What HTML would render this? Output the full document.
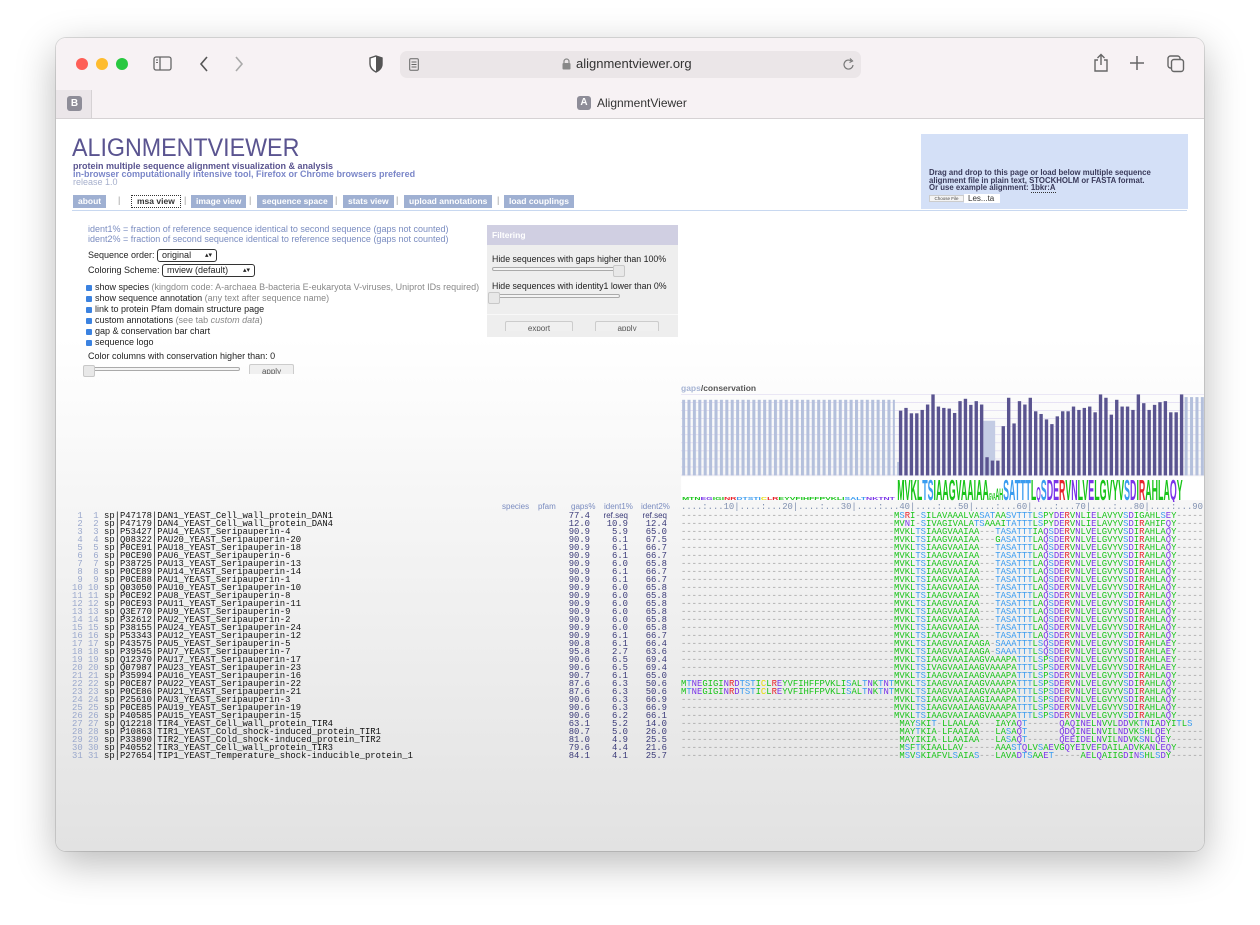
<!DOCTYPE html>
<html><head><meta charset="utf-8"><style>
*{margin:0;padding:0;box-sizing:border-box}
body{width:1260px;height:925px;background:#fff;position:relative;overflow:hidden;font-family:"Liberation Sans",sans-serif}
.win{position:absolute;left:56px;top:38px;width:1148px;height:813px;border-radius:10px;overflow:hidden;box-shadow:0 12px 40px rgba(0,0,0,.28),0 0 0 1px rgba(0,0,0,.12);background:linear-gradient(#fff 0,#fff 300px,#e2e2e2 813px)}
.tb{position:absolute;left:0;top:0;width:1148px;height:52px;background:#f7f2f4}
.tabs{position:absolute;left:0;top:52px;width:1148px;height:29px;background:#f7f2f4;border-bottom:1px solid #d6d2d4}
.ab{position:absolute}
.mono{font-family:"Liberation Mono",monospace}
.aln{position:absolute;left:625px;top:474px;width:523px;height:250px;overflow:hidden;font-family:"Liberation Mono",monospace;font-size:8.9px;line-height:8px;white-space:pre;color:#a0a0a0}
.aln i{font-style:normal}
.g{color:#18c418}.b{color:#3a9cf0}.p{color:#7a34e8}.r{color:#e8242c}.y{color:#e6dc00}
.lt{position:absolute;top:474px;font-family:"Liberation Mono",monospace;font-size:8.9px;line-height:8px;white-space:pre}
.nav span{position:absolute;top:157px;height:13px;background:#9fb0d2;color:#fff;font-size:8.5px;font-weight:bold;line-height:13px;padding:0 5px}
.sep{position:absolute;top:157px;color:#999;font-size:9px}
.opt{position:absolute;font-size:9px;color:#222}
.cb{display:inline-block;width:6px;height:6px;background:#3b82e0;border-radius:1px;margin-right:3px;vertical-align:-1px}
.gr{color:#888}
.sel{display:inline-block;border:1px solid #333;border-radius:3px;padding:0 4px;font-size:9px;background:#fff;height:13px;line-height:11px}
.sl{position:absolute;height:4px;border:1px solid #aaa;border-radius:2px;background:#f4f4f4}
.knob{position:absolute;width:12px;height:12px;background:#e8e8e8;border:1px solid #c8c8c8;border-radius:2px}
.btn{position:absolute;height:10px;border:1px solid #ccc;border-bottom:none;background:#f0f0f0;border-radius:2px 2px 0 0;font-size:8px;color:#555;text-align:center;overflow:hidden;line-height:14px}
</style></head><body>
<div class="win">
<div class="tb">
 <div class="ab" style="left:20px;top:20px;width:12px;height:12px;border-radius:50%;background:#fe5f57"></div>
 <div class="ab" style="left:40px;top:20px;width:12px;height:12px;border-radius:50%;background:#febc2e"></div>
 <div class="ab" style="left:60px;top:20px;width:12px;height:12px;border-radius:50%;background:#28c840"></div>
 <svg class="ab" style="left:97px;top:18px" width="20" height="16"><rect x="1" y="1" width="17" height="13" rx="2" fill="none" stroke="#666" stroke-width="1.3"/><line x1="7" y1="1" x2="7" y2="14" stroke="#666" stroke-width="1.3"/><line x1="3" y1="4" x2="5" y2="4" stroke="#666"/><line x1="3" y1="6.5" x2="5" y2="6.5" stroke="#666"/></svg>
 <svg class="ab" style="left:142px;top:17px" width="12" height="18"><path d="M9 2 L3 9 L9 16" fill="none" stroke="#555" stroke-width="1.6"/></svg>
 <svg class="ab" style="left:177px;top:17px" width="12" height="18"><path d="M3 2 L9 9 L3 16" fill="none" stroke="#aaa" stroke-width="1.6"/></svg>
 <svg class="ab" style="left:313px;top:17px" width="14" height="18"><path d="M7 1 L13 3 L13 9 C13 13 10 15.5 7 17 C4 15.5 1 13 1 9 L1 3 Z" fill="#fff" stroke="#555" stroke-width="1.4"/><path d="M7 1 L13 3 L13 9 C13 13 10 15.5 7 17 Z" fill="#555"/></svg>
 <div class="ab" style="left:344px;top:13px;width:461px;height:27px;background:#ebe6e8;border-radius:7px"></div>
 <svg class="ab" style="left:353px;top:20px" width="10" height="13"><rect x="0.7" y="0.7" width="8.6" height="11.6" rx="1" fill="none" stroke="#666"/><line x1="2.5" y1="4" x2="7.5" y2="4" stroke="#666"/><line x1="2.5" y1="6.5" x2="7.5" y2="6.5" stroke="#666"/><line x1="2.5" y1="9" x2="7.5" y2="9" stroke="#666"/></svg>
 <svg class="ab" style="left:506px;top:20px" width="9" height="12"><rect x="0.5" y="5" width="8" height="6.5" rx="1" fill="#888"/><path d="M2 5 V3.5 A2.5 2.5 0 0 1 7 3.5 V5" fill="none" stroke="#888" stroke-width="1.2"/></svg>
 <div class="ab" style="left:520px;top:18px;font-size:13px;color:#333">alignmentviewer.org</div>
 <svg class="ab" style="left:787px;top:20px" width="12" height="13"><path d="M10 7 A4.5 4.5 0 1 1 8 2.8" fill="none" stroke="#777" stroke-width="1.2"/><path d="M7 0.5 L9.5 3 L6.5 4.5" fill="none" stroke="#777" stroke-width="1.2"/></svg>
 <svg class="ab" style="left:1037px;top:15px" width="16" height="20"><path d="M5 7 H2 V18 H14 V7 H11" fill="none" stroke="#666" stroke-width="1.4"/><path d="M8 12 V1.5 M4.5 5 L8 1.5 L11.5 5" fill="none" stroke="#666" stroke-width="1.4"/></svg>
 <svg class="ab" style="left:1074px;top:18px" width="14" height="14"><path d="M7 0 V14 M0 7 H14" stroke="#666" stroke-width="1.5"/></svg>
 <svg class="ab" style="left:1111px;top:17px" width="18" height="18"><rect x="1" y="1" width="12" height="12" rx="2.5" fill="none" stroke="#666" stroke-width="1.4"/><rect x="4.5" y="4.5" width="12" height="12" rx="2.5" fill="#f7f2f4" stroke="#666" stroke-width="1.4"/></svg>
</div>
<div class="tabs">
 <div class="ab" style="left:0;top:0;width:36px;height:28px;background:#ebe6e9;border-right:1px solid #d6d2d4"></div>
 <div class="ab" style="left:11px;top:6px;width:15px;height:15px;border-radius:3px;background:#8e8d98;color:#fff;font-size:10px;font-weight:bold;text-align:center;line-height:15px">B</div>
 <div class="ab" style="left:521px;top:6px;width:14px;height:14px;border-radius:3px;background:#8e8d98;color:#fff;font-size:10px;font-weight:bold;text-align:center;line-height:14px">A</div>
 <div class="ab" style="left:541px;top:6px;font-size:12px;color:#333">AlignmentViewer</div>
</div>

<div class="ab" style="left:16px;top:96px;font-size:25px;color:#5a5490;transform:scaleX(0.93);transform-origin:0 0">ALIGNMENTVIEWER</div>
<div class="ab" style="left:17px;top:124px;font-size:9px;line-height:9px;font-weight:bold;color:#5a5490">protein multiple sequence alignment visualization &amp; analysis</div>
<div class="ab" style="left:17px;top:132px;font-size:9px;line-height:9px;font-weight:bold;color:#7a86c8">in-browser computationally intensive tool, Firefox or Chrome browsers prefered</div>
<div class="ab" style="left:17px;top:140px;font-size:9px;line-height:9px;color:#a6afcc">release 1.0</div>
<div class="nav">
 <span style="left:17px">about</span>
 <div class="sep" style="left:62px">|</div>
 <span style="left:75px;background:#fff;color:#333;border:1px dotted #333;line-height:11px">msa view</span>
 <div class="sep" style="left:128px">|</div>
 <span style="left:135px">image view</span>
 <div class="sep" style="left:193px">|</div>
 <span style="left:201px">sequence space</span>
 <div class="sep" style="left:279px">|</div>
 <span style="left:287px">stats view</span>
 <div class="sep" style="left:340px">|</div>
 <span style="left:348px">upload annotations</span>
 <div class="sep" style="left:441px">|</div>
 <span style="left:448px">load couplings</span>
</div>
<div class="ab" style="left:16px;top:172px;width:1115px;height:1px;background:#c8d8f0"></div>
<div class="ab" style="left:865px;top:96px;width:267px;height:75px;background:#d4e0f7"></div>
<div class="ab" style="left:873px;top:131px;font-size:7.8px;line-height:7.6px;font-weight:bold;color:#3a3a5a">Drag and drop to this page or load below multiple sequence<br>alignment file in plain text, STOCKHOLM or FASTA format.<br>Or use example alignment: <span style="border-bottom:1px dotted #333">1bkr:A</span></div>
<div class="ab" style="left:873px;top:157px;width:35px;height:7px;background:#f4f4f4;border:1px solid #ccc;font-size:4.5px;color:#444;text-align:center;line-height:5px">Choose File</div>
<div class="ab" style="left:908px;top:156px;width:36px;height:9px;background:#fff;font-size:8px;line-height:9px;color:#333;padding-left:4px">Les...ta</div>

<div class="ab" style="left:32px;top:186px;font-size:9px;line-height:10px;color:#7a8cc0;white-space:nowrap">ident1% = fraction of reference sequence identical to second sequence (gaps not counted)<br>ident2% = fraction of second sequence identical to reference sequence (gaps not counted)</div>
<div class="opt" style="left:32px;top:211px">Sequence order: <span class="sel" style="width:60px">original <span style="float:right;font-size:7px">&#x25B4;&#x25BE;</span></span></div>
<div class="opt" style="left:32px;top:226px">Coloring Scheme: <span class="sel" style="width:93px">mview (default)<span style="float:right;font-size:7px">&#x25B4;&#x25BE;</span></span></div>
<div class="opt" style="left:30px;top:244px;line-height:11px;white-space:nowrap"><span class="cb"></span>show species <span class="gr">(kingdom code: A-archaea B-bacteria E-eukaryota V-viruses, Uniprot IDs required)</span><br><span class="cb"></span>show sequence annotation <span class="gr">(any text after sequence name)</span><br><span class="cb"></span>link to protein Pfam domain structure page<br><span class="cb"></span>custom annotations <span class="gr">(see tab <i>custom data</i>)</span><br><span class="cb"></span>gap &amp; conservation bar chart<br><span class="cb"></span>sequence logo</div>
<div class="opt" style="left:32px;top:313px">Color columns with conservation higher than: 0</div>
<div class="sl" style="left:29px;top:329px;width:155px"></div>
<div class="knob" style="left:27px;top:327px"></div>
<div class="btn" style="left:193px;top:326px;width:45px">apply</div>

<div class="ab" style="left:431px;top:187px;width:191px;height:112px;background:#eeeeee"></div>
<div class="ab" style="left:431px;top:187px;width:191px;height:20px;background:#d0cfe2;color:#fff;font-weight:bold;font-size:8.5px;line-height:20px;padding-left:5px">Filtering</div>
<div class="opt" style="left:436px;top:216px;font-size:8.8px;white-space:nowrap">Hide sequences with gaps higher than 100%</div>
<div class="sl" style="left:436px;top:229px;width:128px"></div>
<div class="knob" style="left:557px;top:227px"></div>
<div class="opt" style="left:436px;top:243px;font-size:8.8px;white-space:nowrap">Hide sequences with identity1 lower than 0%</div>
<div class="sl" style="left:436px;top:256px;width:128px"></div>
<div class="knob" style="left:432px;top:254px"></div>
<div class="ab" style="left:431px;top:276px;width:191px;height:1px;background:#f8f8f8"></div>
<div class="btn" style="left:449px;top:283px;width:68px">export</div>
<div class="btn" style="left:539px;top:283px;width:64px">apply</div>

<div class="ab" style="left:625px;top:345px;font-size:8.5px;font-weight:bold;color:#555"><span style="color:#a6b4d4">gaps</span>/conservation</div>
<svg class="ab" style="left:620px;top:342px" width="537" height="122" viewBox="0 0 1590 360">
<defs>
<pattern id="hl" width="1590" height="23.8" patternUnits="userSpaceOnUse" y="42"><line x1="0" y1="0.5" x2="1590" y2="0.5" stroke="#cfc6ec" stroke-width="2"/></pattern>
<pattern id="lb" width="16" height="300" patternUnits="userSpaceOnUse" x="18"><rect x="0" y="0" width="9" height="300" fill="#b4c0dc"/></pattern>
</defs>
<rect x="15" y="42" width="1550" height="240" fill="url(#hl)"/>
<rect x="18" y="58" width="630" height="224" fill="url(#lb)"/>
<rect x="1502" y="50" width="62" height="232" fill="url(#lb)"/>
<rect x="655" y="242" width="5" height="40" fill="#b4c0dc"/>
<rect x="910" y="120" width="35" height="162" fill="#c4cce4"/>
<g fill="#5a5490">
<rect x="660" y="90" width="10" height="192"/><rect x="676" y="82" width="10" height="200"/><rect x="692" y="98" width="10" height="184"/><rect x="708" y="98" width="10" height="184"/><rect x="724" y="88" width="10" height="194"/><rect x="740" y="72" width="10" height="210"/><rect x="756" y="42" width="10" height="240"/><rect x="772" y="78" width="10" height="204"/><rect x="788" y="82" width="10" height="200"/><rect x="804" y="84" width="10" height="198"/><rect x="820" y="97" width="10" height="185"/><rect x="836" y="62" width="10" height="220"/><rect x="852" y="55" width="10" height="227"/><rect x="868" y="73" width="10" height="209"/><rect x="884" y="62" width="10" height="220"/><rect x="900" y="72" width="10" height="210"/><rect x="916" y="228" width="10" height="54"/><rect x="932" y="238" width="10" height="44"/><rect x="948" y="238" width="10" height="44"/><rect x="964" y="136" width="10" height="146"/><rect x="980" y="52" width="10" height="230"/><rect x="996" y="128" width="10" height="154"/><rect x="1012" y="62" width="10" height="220"/><rect x="1028" y="72" width="10" height="210"/><rect x="1044" y="52" width="10" height="230"/><rect x="1060" y="92" width="10" height="190"/><rect x="1076" y="100" width="10" height="182"/><rect x="1092" y="116" width="10" height="166"/><rect x="1108" y="130" width="10" height="152"/><rect x="1124" y="107" width="10" height="175"/><rect x="1140" y="92" width="10" height="190"/><rect x="1156" y="92" width="10" height="190"/><rect x="1172" y="78" width="10" height="204"/><rect x="1188" y="88" width="10" height="194"/><rect x="1204" y="82" width="10" height="200"/><rect x="1220" y="78" width="10" height="204"/><rect x="1236" y="95" width="10" height="187"/><rect x="1252" y="42" width="10" height="240"/><rect x="1268" y="52" width="10" height="230"/><rect x="1284" y="102" width="10" height="180"/><rect x="1300" y="58" width="10" height="224"/><rect x="1316" y="78" width="10" height="204"/><rect x="1332" y="78" width="10" height="204"/><rect x="1348" y="88" width="10" height="194"/><rect x="1364" y="42" width="10" height="240"/><rect x="1380" y="68" width="10" height="214"/><rect x="1396" y="88" width="10" height="194"/><rect x="1412" y="73" width="10" height="209"/><rect x="1428" y="65" width="10" height="217"/><rect x="1444" y="62" width="10" height="220"/><rect x="1460" y="95" width="10" height="187"/><rect x="1476" y="95" width="10" height="187"/><rect x="1492" y="42" width="10" height="240"/>
</g>
<rect x="15" y="285" width="1550" height="70" fill="#fff"/>
<text x="18" y="355" font-family="Liberation Sans" font-size="14" font-weight="bold" textLength="630" lengthAdjust="spacingAndGlyphs"><tspan fill="#18c418">MTN</tspan><tspan fill="#7a34e8">EG</tspan><tspan fill="#18c418">IGI</tspan><tspan fill="#e8242c">NR</tspan><tspan fill="#3a9cf0">DTSTI</tspan><tspan fill="#e6dc00">C</tspan><tspan fill="#e8242c">LR</tspan><tspan fill="#18c418">EYVFIHFFPVKLI</tspan><tspan fill="#3a9cf0">SALT</tspan><tspan fill="#7a34e8">NKTNT</tspan></text>
<text x="655" y="355" font-family="Liberation Sans" font-size="84" font-weight="bold" textLength="845" lengthAdjust="spacingAndGlyphs"><tspan fill="#18c418">MVKL</tspan><tspan fill="#3a9cf0">TS</tspan><tspan fill="#18c418">IAAGVAAIAA</tspan><tspan fill="#18c418" font-size="30">GVA</tspan><tspan fill="#18c418" font-size="50">AH</tspan><tspan fill="#3a9cf0">SATTT</tspan><tspan fill="#18c418">L</tspan><tspan fill="#7a34e8" font-size="55">Q</tspan><tspan fill="#3a9cf0">S</tspan><tspan fill="#7a34e8">DE</tspan><tspan fill="#e8242c">R</tspan><tspan fill="#18c418">V</tspan><tspan fill="#7a34e8">N</tspan><tspan fill="#18c418">LV</tspan><tspan fill="#7a34e8">E</tspan><tspan fill="#18c418">LGVYV</tspan><tspan fill="#3a9cf0">S</tspan><tspan fill="#7a34e8">D</tspan><tspan fill="#18c418">I</tspan><tspan fill="#e8242c">R</tspan><tspan fill="#18c418">AHLA</tspan><tspan fill="#7a34e8">Q</tspan><tspan fill="#18c418">Y</tspan></text>
</svg>
<div class="ab mono" style="left:625px;top:464px;font-size:8.9px;color:#8090b0;white-space:pre">....:...10|....:...20|....:...30|....:...40|....:...50|....:...60|....:...70|....:...80|....:...90|....:</div>

<div class="ab" style="left:446px;top:464px;font-size:8px;color:#7a8cc0">species</div>
<div class="ab" style="left:482px;top:464px;font-size:8px;color:#7a8cc0">pfam</div>
<div class="ab" style="left:515px;top:464px;font-size:8px;color:#7a8cc0">gaps%</div>
<div class="ab" style="left:548px;top:464px;font-size:8px;color:#7a8cc0">ident1%</div>
<div class="ab" style="left:585px;top:464px;font-size:8px;color:#7a8cc0">ident2%</div>

<div class="lt" style="left:16px;color:#9aa8cc"> 1  1
 2  2
 3  3
 4  4
 5  5
 6  6
 7  7
 8  8
 9  9
10 10
11 11
12 12
13 13
14 14
15 15
16 16
17 17
18 18
19 19
20 20
21 21
22 22
23 23
24 24
25 25
26 26
27 27
28 28
29 29
30 30
31 31</div>
<div class="lt" style="left:48px;color:#111">sp|P47178|DAN1_YEAST_Cell_wall_protein_DAN1
sp|P47179|DAN4_YEAST_Cell_wall_protein_DAN4
sp|P53427|PAU4_YEAST_Seripauperin-4
sp|Q08322|PAU20_YEAST_Seripauperin-20
sp|P0CE91|PAU18_YEAST_Seripauperin-18
sp|P0CE90|PAU6_YEAST_Seripauperin-6
sp|P38725|PAU13_YEAST_Seripauperin-13
sp|P0CE89|PAU14_YEAST_Seripauperin-14
sp|P0CE88|PAU1_YEAST_Seripauperin-1
sp|Q03050|PAU10_YEAST_Seripauperin-10
sp|P0CE92|PAU8_YEAST_Seripauperin-8
sp|P0CE93|PAU11_YEAST_Seripauperin-11
sp|Q3E770|PAU9_YEAST_Seripauperin-9
sp|P32612|PAU2_YEAST_Seripauperin-2
sp|P38155|PAU24_YEAST_Seripauperin-24
sp|P53343|PAU12_YEAST_Seripauperin-12
sp|P43575|PAU5_YEAST_Seripauperin-5
sp|P39545|PAU7_YEAST_Seripauperin-7
sp|Q12370|PAU17_YEAST_Seripauperin-17
sp|Q07987|PAU23_YEAST_Seripauperin-23
sp|P35994|PAU16_YEAST_Seripauperin-16
sp|P0CE87|PAU22_YEAST_Seripauperin-22
sp|P0CE86|PAU21_YEAST_Seripauperin-21
sp|P25610|PAU3_YEAST_Seripauperin-3
sp|P0CE85|PAU19_YEAST_Seripauperin-19
sp|P40585|PAU15_YEAST_Seripauperin-15
sp|Q12218|TIR4_YEAST_Cell_wall_protein_TIR4
sp|P10863|TIR1_YEAST_Cold_shock-induced_protein_TIR1
sp|P33890|TIR2_YEAST_Cold_shock-induced_protein_TIR2
sp|P40552|TIR3_YEAST_Cell_wall_protein_TIR3
sp|P27654|TIP1_YEAST_Temperature_shock-inducible_protein_1</div>
<div class="lt" style="left:508px;width:26px;text-align:right;color:#3a3a78">77.4
12.0
90.9
90.9
90.9
90.9
90.9
90.9
90.9
90.9
90.9
90.9
90.9
90.9
90.9
90.9
90.8
95.8
90.6
90.6
90.7
87.6
87.6
90.6
90.6
90.6
63.1
80.7
81.0
79.6
84.1</div>
<div class="lt" style="left:542px;width:30px;text-align:right;color:#3a3a78"><span style="font-family:'Liberation Sans';font-size:8px">ref.seq</span>
10.9
5.9
6.1
6.1
6.1
6.0
6.1
6.1
6.0
6.0
6.0
6.0
6.0
6.0
6.1
6.1
2.7
6.5
6.5
6.1
6.3
6.3
6.3
6.3
6.2
5.2
5.0
4.9
4.4
4.1</div>
<div class="lt" style="left:581px;width:30px;text-align:right;color:#3a3a78"><span style="font-family:'Liberation Sans';font-size:8px">ref.seq</span>
12.4
65.0
67.5
66.7
66.7
65.8
66.7
66.7
65.8
65.8
65.8
65.8
65.8
65.8
66.7
66.4
63.6
69.4
69.4
65.0
50.6
50.6
66.9
66.9
66.1
14.0
26.0
25.5
21.6
25.7</div>

<div class="aln">----------------------------------------<i class=g>M</i><i class=b>S</i><i class=r>R</i><i class=g>I</i>-<i class=b>S</i><i class=g>ILAVAAALVA</i><i class=b>SAT</i><i class=g>AA</i><i class=b>SVTTT</i><i class=g>L</i><i class=b>S</i><i class=g>PY</i><i class=p>DE</i><i class=r>R</i><i class=g>V</i><i class=p>N</i><i class=g>LI</i><i class=p>E</i><i class=g>LAVYV</i><i class=b>S</i><i class=p>D</i><i class=g>IGAHL</i><i class=b>S</i><i class=p>E</i><i class=g>Y</i>----------
----------------------------------------<i class=g>MV</i><i class=p>N</i><i class=g>I</i>-<i class=b>S</i><i class=g>IVAGIVALA</i><i class=b>TS</i><i class=g>AAAI</i><i class=b>TATTT</i><i class=g>L</i><i class=b>S</i><i class=g>PY</i><i class=p>DE</i><i class=r>R</i><i class=g>V</i><i class=p>N</i><i class=g>LI</i><i class=p>E</i><i class=g>LAVYV</i><i class=b>S</i><i class=p>D</i><i class=g>I</i><i class=r>R</i><i class=g>AHIF</i><i class=p>Q</i><i class=g>Y</i>----------
----------------------------------------<i class=g>MVKL</i><i class=b>TS</i><i class=g>IAAGVAAIAA</i>---<i class=b>TASATTT</i><i class=g>IA</i><i class=p>Q</i><i class=b>S</i><i class=p>DE</i><i class=r>R</i><i class=g>V</i><i class=p>N</i><i class=g>LV</i><i class=p>E</i><i class=g>LGVYV</i><i class=b>S</i><i class=p>D</i><i class=g>I</i><i class=r>R</i><i class=g>AHLA</i><i class=p>Q</i><i class=g>Y</i>----------
----------------------------------------<i class=g>MVKL</i><i class=b>TS</i><i class=g>IAAGVAAIAA</i>---<i class=g>G</i><i class=b>ASATTT</i><i class=g>LA</i><i class=p>Q</i><i class=b>S</i><i class=p>DE</i><i class=r>R</i><i class=g>V</i><i class=p>N</i><i class=g>LV</i><i class=p>E</i><i class=g>LGVYV</i><i class=b>S</i><i class=p>D</i><i class=g>I</i><i class=r>R</i><i class=g>AHLA</i><i class=p>Q</i><i class=g>Y</i>----------
----------------------------------------<i class=g>MVKL</i><i class=b>TS</i><i class=g>IAAGVAAIAA</i>---<i class=b>TASATTT</i><i class=g>LA</i><i class=p>Q</i><i class=b>S</i><i class=p>DE</i><i class=r>R</i><i class=g>V</i><i class=p>N</i><i class=g>LV</i><i class=p>E</i><i class=g>LGVYV</i><i class=b>S</i><i class=p>D</i><i class=g>I</i><i class=r>R</i><i class=g>AHLA</i><i class=p>Q</i><i class=g>Y</i>----------
----------------------------------------<i class=g>MVKL</i><i class=b>TS</i><i class=g>IAAGVAAIAA</i>---<i class=b>TASATTT</i><i class=g>LA</i><i class=p>Q</i><i class=b>S</i><i class=p>DE</i><i class=r>R</i><i class=g>V</i><i class=p>N</i><i class=g>LV</i><i class=p>E</i><i class=g>LGVYV</i><i class=b>S</i><i class=p>D</i><i class=g>I</i><i class=r>R</i><i class=g>AHLA</i><i class=p>Q</i><i class=g>Y</i>----------
----------------------------------------<i class=g>MVKL</i><i class=b>TS</i><i class=g>IAAGVAAIAA</i>---<i class=b>TASATTT</i><i class=g>LA</i><i class=p>Q</i><i class=b>S</i><i class=p>DE</i><i class=r>R</i><i class=g>V</i><i class=p>N</i><i class=g>LV</i><i class=p>E</i><i class=g>LGVYV</i><i class=b>S</i><i class=p>D</i><i class=g>I</i><i class=r>R</i><i class=g>AHLA</i><i class=p>Q</i><i class=g>Y</i>----------
----------------------------------------<i class=g>MVKL</i><i class=b>TS</i><i class=g>IAAGVAAIAA</i>---<i class=b>TASATTT</i><i class=g>LA</i><i class=p>Q</i><i class=b>S</i><i class=p>DE</i><i class=r>R</i><i class=g>V</i><i class=p>N</i><i class=g>LV</i><i class=p>E</i><i class=g>LGVYV</i><i class=b>S</i><i class=p>D</i><i class=g>I</i><i class=r>R</i><i class=g>AHLA</i><i class=p>Q</i><i class=g>Y</i>----------
----------------------------------------<i class=g>MVKL</i><i class=b>TS</i><i class=g>IAAGVAAIAA</i>---<i class=b>TASATTT</i><i class=g>LA</i><i class=p>Q</i><i class=b>S</i><i class=p>DE</i><i class=r>R</i><i class=g>V</i><i class=p>N</i><i class=g>LV</i><i class=p>E</i><i class=g>LGVYV</i><i class=b>S</i><i class=p>D</i><i class=g>I</i><i class=r>R</i><i class=g>AHLA</i><i class=p>Q</i><i class=g>Y</i>----------
----------------------------------------<i class=g>MVKL</i><i class=b>TS</i><i class=g>IAAGVAAIAA</i>---<i class=b>TASATTT</i><i class=g>LA</i><i class=p>Q</i><i class=b>S</i><i class=p>DE</i><i class=r>R</i><i class=g>V</i><i class=p>N</i><i class=g>LV</i><i class=p>E</i><i class=g>LGVYV</i><i class=b>S</i><i class=p>D</i><i class=g>I</i><i class=r>R</i><i class=g>AHLA</i><i class=p>Q</i><i class=g>Y</i>----------
----------------------------------------<i class=g>MVKL</i><i class=b>TS</i><i class=g>IAAGVAAIAA</i>---<i class=b>TASATTT</i><i class=g>LA</i><i class=p>Q</i><i class=b>S</i><i class=p>DE</i><i class=r>R</i><i class=g>V</i><i class=p>N</i><i class=g>LV</i><i class=p>E</i><i class=g>LGVYV</i><i class=b>S</i><i class=p>D</i><i class=g>I</i><i class=r>R</i><i class=g>AHLA</i><i class=p>Q</i><i class=g>Y</i>----------
----------------------------------------<i class=g>MVKL</i><i class=b>TS</i><i class=g>IAAGVAAIAA</i>---<i class=b>TASATTT</i><i class=g>LA</i><i class=p>Q</i><i class=b>S</i><i class=p>DE</i><i class=r>R</i><i class=g>V</i><i class=p>N</i><i class=g>LV</i><i class=p>E</i><i class=g>LGVYV</i><i class=b>S</i><i class=p>D</i><i class=g>I</i><i class=r>R</i><i class=g>AHLA</i><i class=p>Q</i><i class=g>Y</i>----------
----------------------------------------<i class=g>MVKL</i><i class=b>TS</i><i class=g>IAAGVAAIAA</i>---<i class=b>TASATTT</i><i class=g>LA</i><i class=p>Q</i><i class=b>S</i><i class=p>DE</i><i class=r>R</i><i class=g>V</i><i class=p>N</i><i class=g>LV</i><i class=p>E</i><i class=g>LGVYV</i><i class=b>S</i><i class=p>D</i><i class=g>I</i><i class=r>R</i><i class=g>AHLA</i><i class=p>Q</i><i class=g>Y</i>----------
----------------------------------------<i class=g>MVKL</i><i class=b>TS</i><i class=g>IAAGVAAIAA</i>---<i class=b>TASATTT</i><i class=g>LA</i><i class=p>Q</i><i class=b>S</i><i class=p>DE</i><i class=r>R</i><i class=g>V</i><i class=p>N</i><i class=g>LV</i><i class=p>E</i><i class=g>LGVYV</i><i class=b>S</i><i class=p>D</i><i class=g>I</i><i class=r>R</i><i class=g>AHLA</i><i class=p>Q</i><i class=g>Y</i>----------
----------------------------------------<i class=g>MVKL</i><i class=b>TS</i><i class=g>IAAGVAAIAA</i>---<i class=b>TASATTT</i><i class=g>LA</i><i class=p>Q</i><i class=b>S</i><i class=p>DE</i><i class=r>R</i><i class=g>V</i><i class=p>N</i><i class=g>LV</i><i class=p>E</i><i class=g>LGVYV</i><i class=b>S</i><i class=p>D</i><i class=g>I</i><i class=r>R</i><i class=g>AHLA</i><i class=p>Q</i><i class=g>Y</i>----------
----------------------------------------<i class=g>MVKL</i><i class=b>TS</i><i class=g>IAAGVAAIAA</i>---<i class=b>TASATTT</i><i class=g>LA</i><i class=p>Q</i><i class=b>S</i><i class=p>DE</i><i class=r>R</i><i class=g>V</i><i class=p>N</i><i class=g>LV</i><i class=p>E</i><i class=g>LGVYV</i><i class=b>S</i><i class=p>D</i><i class=g>I</i><i class=r>R</i><i class=g>AHLA</i><i class=p>Q</i><i class=g>Y</i>----------
----------------------------------------<i class=g>MVKL</i><i class=b>TS</i><i class=g>IAAGVAAIAAGA</i>-<i class=b>SAAATTT</i><i class=g>L</i><i class=b>S</i><i class=p>Q</i><i class=b>S</i><i class=p>DE</i><i class=r>R</i><i class=g>V</i><i class=p>N</i><i class=g>LV</i><i class=p>E</i><i class=g>LGVYV</i><i class=b>S</i><i class=p>D</i><i class=g>I</i><i class=r>R</i><i class=g>AHLA</i><i class=p>E</i><i class=g>Y</i>----------
----------------------------------------<i class=g>MVKL</i><i class=b>TS</i><i class=g>IAAGVAAIAAGA</i>-<i class=b>SAAATTT</i><i class=g>L</i><i class=b>S</i><i class=p>Q</i><i class=b>S</i><i class=p>DE</i><i class=r>R</i><i class=g>V</i><i class=p>N</i><i class=g>LV</i><i class=p>E</i><i class=g>LGVYV</i><i class=b>S</i><i class=p>D</i><i class=g>I</i><i class=r>R</i><i class=g>AHLA</i><i class=p>E</i><i class=g>Y</i>----------
----------------------------------------<i class=g>MVKL</i><i class=b>TS</i><i class=g>IAAGVAAIAAGVAAAPA</i><i class=b>TTT</i><i class=g>L</i><i class=b>S</i><i class=g>P</i><i class=b>S</i><i class=p>DE</i><i class=r>R</i><i class=g>V</i><i class=p>N</i><i class=g>LV</i><i class=p>E</i><i class=g>LGVYV</i><i class=b>S</i><i class=p>D</i><i class=g>I</i><i class=r>R</i><i class=g>AHLA</i><i class=p>E</i><i class=g>Y</i>----------
----------------------------------------<i class=g>MVKL</i><i class=b>TS</i><i class=g>IVAGVAAIAAGVAAAPA</i><i class=b>TTT</i><i class=g>L</i><i class=b>S</i><i class=g>P</i><i class=b>S</i><i class=p>DE</i><i class=r>R</i><i class=g>V</i><i class=p>N</i><i class=g>LV</i><i class=p>E</i><i class=g>LGVYV</i><i class=b>S</i><i class=p>D</i><i class=g>I</i><i class=r>R</i><i class=g>AHLA</i><i class=p>E</i><i class=g>Y</i>----------
----------------------------------------<i class=g>MVKL</i><i class=b>TS</i><i class=g>IAAGVAAIAAGVAAAPA</i><i class=b>TTT</i><i class=g>L</i><i class=b>S</i><i class=g>P</i><i class=b>S</i><i class=p>DE</i><i class=r>R</i><i class=g>V</i><i class=p>N</i><i class=g>LV</i><i class=p>E</i><i class=g>LGVYV</i><i class=b>S</i><i class=p>D</i><i class=g>I</i><i class=r>R</i><i class=g>AHLA</i><i class=p>Q</i><i class=g>Y</i>----------
<i class=g>M</i><i class=b>T</i><i class=p>NE</i><i class=g>GIGI</i><i class=p>N</i><i class=r>R</i><i class=p>D</i><i class=b>TST</i><i class=g>I</i><i class=y>C</i><i class=g>L</i><i class=r>R</i><i class=p>E</i><i class=g>YVFIHFFPVKLI</i><i class=b>S</i><i class=g>AL</i><i class=b>T</i><i class=p>N</i><i class=g>K</i><i class=b>T</i><i class=p>N</i><i class=b>T</i><i class=g>MVKL</i><i class=b>TS</i><i class=g>IAAGVAAIAAGVAAAPA</i><i class=b>TTT</i><i class=g>L</i><i class=b>S</i><i class=g>P</i><i class=b>S</i><i class=p>DE</i><i class=r>R</i><i class=g>V</i><i class=p>N</i><i class=g>LV</i><i class=p>E</i><i class=g>LGVYV</i><i class=b>S</i><i class=p>D</i><i class=g>I</i><i class=r>R</i><i class=g>AHLA</i><i class=p>Q</i><i class=g>Y</i>----------
<i class=g>M</i><i class=b>T</i><i class=p>NE</i><i class=g>GIGI</i><i class=p>N</i><i class=r>R</i><i class=p>D</i><i class=b>TST</i><i class=g>I</i><i class=y>C</i><i class=g>L</i><i class=r>R</i><i class=p>E</i><i class=g>YVFIHFFPVKLI</i><i class=b>S</i><i class=g>AL</i><i class=b>T</i><i class=p>N</i><i class=g>K</i><i class=b>T</i><i class=p>N</i><i class=b>T</i><i class=g>MVKL</i><i class=b>TS</i><i class=g>IAAGVAAIAAGVAAAPA</i><i class=b>TTT</i><i class=g>L</i><i class=b>S</i><i class=g>P</i><i class=b>S</i><i class=p>DE</i><i class=r>R</i><i class=g>V</i><i class=p>N</i><i class=g>LV</i><i class=p>E</i><i class=g>LGVYV</i><i class=b>S</i><i class=p>D</i><i class=g>I</i><i class=r>R</i><i class=g>AHLA</i><i class=p>Q</i><i class=g>Y</i>----------
----------------------------------------<i class=g>MVKL</i><i class=b>TS</i><i class=g>IAAGVAAIAAGIAAAPA</i><i class=b>TTT</i><i class=g>L</i><i class=b>S</i><i class=g>P</i><i class=b>S</i><i class=p>DE</i><i class=r>R</i><i class=g>V</i><i class=p>N</i><i class=g>LV</i><i class=p>E</i><i class=g>LGVYV</i><i class=b>S</i><i class=p>D</i><i class=g>I</i><i class=r>R</i><i class=g>AHLA</i><i class=p>Q</i><i class=g>Y</i>----------
----------------------------------------<i class=g>MVKL</i><i class=b>TS</i><i class=g>IAAGVAAIAAGVAAAPA</i><i class=b>TTT</i><i class=g>L</i><i class=b>S</i><i class=g>P</i><i class=b>S</i><i class=p>DE</i><i class=r>R</i><i class=g>V</i><i class=p>N</i><i class=g>LV</i><i class=p>E</i><i class=g>LGVYV</i><i class=b>S</i><i class=p>D</i><i class=g>I</i><i class=r>R</i><i class=g>AHLA</i><i class=p>Q</i><i class=g>Y</i>----------
----------------------------------------<i class=g>MVKL</i><i class=b>TS</i><i class=g>IAAGVAAIAAGVAAAPA</i><i class=b>TTT</i><i class=g>L</i><i class=b>S</i><i class=g>P</i><i class=b>S</i><i class=p>DE</i><i class=r>R</i><i class=g>V</i><i class=p>N</i><i class=g>LV</i><i class=p>E</i><i class=g>LGVYV</i><i class=b>S</i><i class=p>D</i><i class=g>I</i><i class=r>R</i><i class=g>AHLA</i><i class=p>Q</i><i class=g>Y</i>----------
-----------------------------------------<i class=g>MAY</i><i class=b>S</i><i class=g>KI</i><i class=b>T</i>-<i class=g>LLAALAA</i>---<i class=g>IAYA</i><i class=p>Q</i><i class=b>T</i>------<i class=p>Q</i><i class=g>A</i><i class=p>Q</i><i class=g>I</i><i class=p>NE</i><i class=g>L</i><i class=p>N</i><i class=g>VVL</i><i class=p>DD</i><i class=g>VK</i><i class=b>T</i><i class=p>N</i><i class=g>IA</i><i class=p>D</i><i class=g>YI</i><i class=b>T</i><i class=g>L</i><i class=b>S</i>
-----------------------------------------<i class=g>MAY</i><i class=b>T</i><i class=g>KIA</i>-<i class=g>LFAAIAA</i>---<i class=g>LA</i><i class=b>S</i><i class=g>A</i><i class=p>Q</i><i class=b>T</i>------<i class=p>QDQ</i><i class=g>I</i><i class=p>NE</i><i class=g>L</i><i class=p>N</i><i class=g>VIL</i><i class=p>ND</i><i class=g>VK</i><i class=b>S</i><i class=g>HL</i><i class=p>QE</i><i class=g>Y</i>----------
-----------------------------------------<i class=g>MAYIKIA</i>-<i class=g>LLAAIAA</i>---<i class=g>LA</i><i class=b>S</i><i class=g>A</i><i class=p>Q</i><i class=b>T</i>------<i class=p>QEE</i><i class=g>I</i><i class=p>DE</i><i class=g>L</i><i class=p>N</i><i class=g>VIL</i><i class=p>ND</i><i class=g>VK</i><i class=b>S</i><i class=p>N</i><i class=g>L</i><i class=p>QE</i><i class=g>Y</i>----------
-----------------------------------------<i class=g>M</i><i class=b>S</i><i class=g>F</i><i class=b>T</i><i class=g>KIAALLAV</i>------<i class=g>AAA</i><i class=b>ST</i><i class=p>Q</i><i class=g>LV</i><i class=b>S</i><i class=g>A</i><i class=p>E</i><i class=g>VG</i><i class=p>Q</i><i class=g>Y</i><i class=p>E</i><i class=g>IV</i><i class=p>E</i><i class=g>F</i><i class=p>D</i><i class=g>AILA</i><i class=p>D</i><i class=g>VKA</i><i class=p>N</i><i class=g>L</i><i class=p>EQ</i><i class=g>Y</i>----------
-----------------------------------------<i class=g>M</i><i class=b>S</i><i class=g>V</i><i class=b>S</i><i class=g>KIAFVL</i><i class=b>S</i><i class=g>AIA</i><i class=b>S</i>---<i class=g>LAVA</i><i class=p>D</i><i class=b>TS</i><i class=g>AA</i><i class=p>E</i><i class=b>T</i>-----<i class=g>A</i><i class=p>E</i><i class=g>L</i><i class=p>Q</i><i class=g>AIIG</i><i class=p>D</i><i class=g>I</i><i class=p>N</i><i class=b>S</i><i class=g>HL</i><i class=b>S</i><i class=p>D</i><i class=g>Y</i>----------</div>
</div>
</body></html>
